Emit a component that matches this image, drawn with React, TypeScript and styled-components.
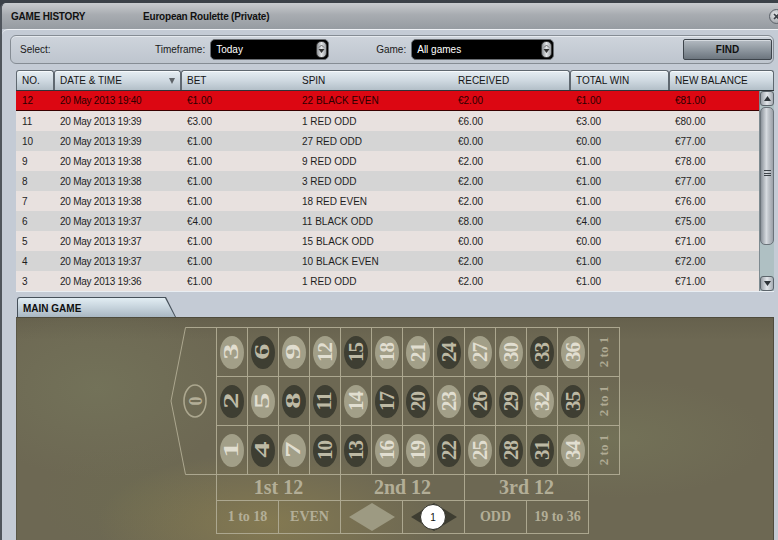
import React from 'react'
import styled, { createGlobalStyle } from 'styled-components'

const GlobalStyle = createGlobalStyle`
    html, body {
        margin: 0;
        padding: 0;
        background: #2d333a;
    }
    body {
        font-family: "Liberation Sans", Arial, sans-serif;
    }
`

const LINE = '#aca78f'
const RED_NUMBERS = [1, 3, 5, 7, 9, 12, 14, 16, 18, 19, 21, 23, 25, 27, 30, 32, 34, 36]

const Screen = styled.div`
    width: 778px;
    height: 540px;
    overflow: hidden;
    box-sizing: border-box;
    padding-top: 3px;
    background: linear-gradient(#3b4148, #272c32);
`

const Window = styled.div`
    height: 537px;
    display: flex;
    flex-direction: column;
    border-left: 2px solid #4f555c;
    border-top-left-radius: 6px;
    background: #c4cbd5;
    overflow: hidden;
`

const TitleBar = styled.div`
    height: 26px;
    flex: none;
    display: flex;
    align-items: center;
    padding-left: 9px;
    background: linear-gradient(#c8cbce, #a8acb1 45%, #969ca2);
    font-size: 10px;
    font-weight: bold;
    color: #111;
    letter-spacing: -0.2px;
`

const Title = styled.span`
    width: 132px;
`

const CloseButton = styled.div`
    margin-left: auto;
    margin-right: -6px;
    width: 13px;
    height: 13px;
    border-radius: 50%;
    background: radial-gradient(circle at 40% 35%, #e4e6e8, #8d9298);
    border: 1px solid #5d636a;
    display: flex;
    align-items: center;
    justify-content: center;
`

const Body = styled.div`
    flex: 1;
    display: flex;
    flex-direction: column;
    border-top: 1px solid #eef1f5;
    border-top-left-radius: 6px;
    padding: 5px 4px 0 8px;
    min-height: 0;
`

const FilterBar = styled.div`
    height: 29px;
    box-sizing: border-box;
    display: flex;
    align-items: center;
    padding-left: 9px;
    border: 1px solid #858c94;
    border-radius: 6px;
    background: linear-gradient(#ced4dc, #bec5ce);
    box-shadow: inset 0 1px 0 #e6eaef;
    font-size: 10px;
    color: #1a1a1a;
`

const Label = styled.span<{ $width?: number; $ml?: number }>`
    width: ${(p) => (p.$width ? `${p.$width}px` : 'auto')};
    margin-left: ${(p) => p.$ml ?? 0}px;
    margin-right: 5px;
`

const Dropdown = styled.div<{ $width: number }>`
    width: ${(p) => p.$width}px;
    height: 21px;
    box-sizing: border-box;
    display: flex;
    align-items: center;
    justify-content: space-between;
    padding: 0 1px 0 5px;
    border: 1px solid #6a6e73;
    border-radius: 5px;
    background: #000;
    color: #fff;
    font-size: 10px;
`

const Knob = styled.div`
    width: 11px;
    height: 17px;
    border-radius: 5px;
    border: 1px solid #3a3a3a;
    box-sizing: border-box;
    background: linear-gradient(90deg, #8e9296, #e2e4e6 50%, #9ea2a6);
    display: flex;
    align-items: center;
    justify-content: center;
`

const FindButton = styled.div`
    margin-left: auto;
    margin-right: 1px;
    width: 89px;
    height: 21px;
    box-sizing: border-box;
    display: flex;
    align-items: center;
    justify-content: center;
    border: 1px solid #3d444b;
    border-radius: 2px;
    background: linear-gradient(#b4bbc2, #8f98a0 50%, #6c757e);
    box-shadow: inset 0 1px 0 #d5dadf;
    font-size: 10px;
    font-weight: bold;
    color: #111;
`

const Table = styled.div`
    margin: 6px 0 0 6px;
    width: 758px;
    flex: none;
`

const COLS = '38px 127px 115px 156px 118px 99px 105px'
const ROW_COLS = '38px 127px 115px 156px 118px 99px 90px'

const HeaderRow = styled.div`
    display: grid;
    grid-template-columns: ${COLS};
    height: 21px;
    border-bottom: 1px solid #2e3338;
    box-sizing: border-box;
`

const HeaderCell = styled.div<{ $edge?: 'left' | 'mid' | 'right' }>`
    position: relative;
    display: flex;
    align-items: center;
    padding-left: 5px;
    border: 1px solid #5f6870;
    border-bottom: none;
    border-radius: 3px 3px 0 0;
    ${(p) => (p.$edge === 'left' || p.$edge === 'mid' ? 'border-right: none; border-top-right-radius: 0;' : '')}
    ${(p) => (p.$edge === 'right' || p.$edge === 'mid' ? 'border-left: none; border-top-left-radius: 0; padding-left: 6px;' : '')}
    background: linear-gradient(#e6eef3, #cfd9e1 50%, #b3bfc8);
    box-shadow: inset 0 1px 0 #f7fafc;
    font-size: 10px;
    color: #151515;
`

const SortArrow = styled.span`
    position: absolute;
    right: 5px;
    top: 7px;
    width: 0;
    height: 0;
    border-left: 3.5px solid transparent;
    border-right: 3.5px solid transparent;
    border-top: 6px solid #5e6368;
`

const RowsWrap = styled.div`
    display: flex;
    border-bottom: 1px solid #e9eef3;
`

const RowList = styled.div`
    flex: 1;
`

const Row = styled.div<{ $variant: 'sel' | 'a' | 'b' }>`
    display: grid;
    grid-template-columns: ${ROW_COLS};
    height: 20px;
    box-sizing: border-box;
    background: ${(p) => (p.$variant === 'sel' ? '#dc0712' : p.$variant === 'a' ? '#e8e1df' : '#d5d5d5')};
    ${(p) => (p.$variant === 'sel' ? 'border-bottom: 1px solid #3a0000;' : '')}
    color: ${(p) => (p.$variant === 'sel' ? '#2a0000' : '#1e1e1e')};
    font-size: 10px;
`

const Cell = styled.div<{ $tight?: boolean }>`
    padding-left: 6px;
    display: flex;
    align-items: center;
    white-space: nowrap;
    letter-spacing: ${(p) => (p.$tight ? '-0.25px' : '0')};
`

const Scrollbar = styled.div`
    width: 15px;
    display: flex;
    flex-direction: column;
    background: #afc0c3;
    border-left: 1px solid #7d8a90;
    box-sizing: border-box;
`

const ScrollButton = styled.div`
    height: 15px;
    flex: none;
    box-sizing: border-box;
    border: 1px solid #5c646b;
    border-radius: 3px;
    background: linear-gradient(90deg, #9ba1a8, #e3e6ea 50%, #a6acb3);
    display: flex;
    align-items: center;
    justify-content: center;
`

const Thumb = styled.div`
    height: 138px;
    flex: none;
    margin-top: 1px;
    box-sizing: border-box;
    border: 1px solid #6b737a;
    border-radius: 5px;
    background: linear-gradient(90deg, #8c939b, #d7dbe0 45%, #c3c8ce 60%, #9ba1a8);
    display: flex;
    justify-content: center;
    padding-top: 62px;
`

const Grip = styled.div`
    width: 7px;
    height: 6px;
    border-top: 1px solid #3c4248;
    border-bottom: 1px solid #3c4248;
    box-sizing: border-box;
    position: relative;
    &::after {
        content: '';
        position: absolute;
        left: 0;
        right: 0;
        top: 1.5px;
        border-top: 1px solid #3c4248;
    }
`

const Track = styled.div`
    flex: 1;
`

const Tab = styled.div`
    margin: 5px 0 0 7px;
    width: 159px;
    height: 20px;
    flex: none;
    padding: 1px 1px 0 1px;
    box-sizing: border-box;
    background: #45505a;
    clip-path: polygon(0 0, calc(100% - 10px) 0, 100% 100%, 0 100%);
    border-radius: 3px 0 0 0;
`

const TabInner = styled.div`
    height: 100%;
    display: flex;
    align-items: flex-end;
    padding: 0 0 3px 5px;
    box-sizing: border-box;
    background: linear-gradient(#e2edf3, #c6d3dc 50%, #a9b7c2);
    clip-path: polygon(0 0, calc(100% - 10px) 0, 100% 100%, 0 100%);
    border-radius: 2px 0 0 0;
    font-size: 10px;
    font-weight: bold;
    color: #0e0e0e;
`

const GameArea = styled.div`
    margin-left: 6px;
    width: 758px;
    flex: 1;
    box-sizing: border-box;
    border-top: 1px solid #4e4b3c;
    border-left: 1px solid #5a5746;
    border-right: 1px solid #4e4b3c;
    padding: 9px 0 0 153px;
    background:
        radial-gradient(ellipse 170px 70px at 250px 205px, rgba(150, 135, 80, 0.55), transparent),
        radial-gradient(ellipse 150px 60px at 600px 120px, rgba(125, 130, 95, 0.35), transparent),
        radial-gradient(ellipse 140px 90px at 80px 70px, rgba(122, 126, 96, 0.45), transparent),
        radial-gradient(ellipse 100px 60px at 120px 180px, rgba(110, 110, 80, 0.4), transparent),
        linear-gradient(#66614d, #6d6853 10%, #6d6853);
`

const Board = styled.div`
    display: flex;
    align-items: flex-start;
`

const Main = styled.div`
    display: flex;
    flex-direction: column;
`

const NumGrid = styled.div`
    display: grid;
    grid-template-columns: repeat(13, 31px);
    grid-template-rows: repeat(3, 49px);
    border-top: 1px solid ${LINE};
    border-left: 1px solid ${LINE};
    width: max-content;
`

const NumCell = styled.div`
    box-sizing: border-box;
    border-right: 1px solid ${LINE};
    border-bottom: 1px solid ${LINE};
    display: flex;
    align-items: center;
    justify-content: center;
`

const Oval = styled.div<{ $dark: boolean }>`
    width: 24px;
    height: 33px;
    border-radius: 50%;
    background: ${(p) => (p.$dark ? '#3e3e32' : '#a29f88')};
    color: ${(p) => (p.$dark ? '#bdb9a4' : '#e1ded0')};
    display: flex;
    align-items: center;
    justify-content: center;
    overflow: hidden;
`

const NumText = styled.span<{ $single: boolean }>`
    font-family: "Liberation Serif", "Times New Roman", serif;
    font-weight: bold;
    font-size: 21px;
    line-height: 1;
    letter-spacing: -1px;
    white-space: nowrap;
    transform: rotate(-90deg) scaleX(${(p) => (p.$single ? 1.55 : 1)});
`

const TwoToOne = styled.span`
    font-family: "Liberation Serif", "Times New Roman", serif;
    font-weight: bold;
    font-size: 13px;
    color: #b0ab94;
    white-space: nowrap;
    transform: rotate(-90deg);
`

const BetRow = styled.div`
    display: flex;
    border-left: 1px solid ${LINE};
    width: max-content;
`

const BetCell = styled.div<{ $w: number; $h: number; $size: number }>`
    position: relative;
    width: ${(p) => p.$w}px;
    height: ${(p) => p.$h}px;
    box-sizing: border-box;
    border-right: 1px solid ${LINE};
    border-bottom: 1px solid ${LINE};
    display: flex;
    align-items: center;
    justify-content: center;
    font-family: "Liberation Serif", "Times New Roman", serif;
    font-weight: bold;
    font-size: ${(p) => p.$size}px;
    color: #b3ae97;
    white-space: nowrap;
`

const Chip = styled.div`
    position: absolute;
    left: 17px;
    top: 3px;
    width: 26px;
    height: 26px;
    box-sizing: border-box;
    border-radius: 50%;
    background: #fff;
    border: 1px solid #2e2e26;
    display: flex;
    align-items: center;
    justify-content: center;
    font-family: "Liberation Sans", Arial, sans-serif;
    font-weight: normal;
    font-size: 10px;
    color: #111;
`

type HistoryRow = [string, string, string, string, string, string, string]

const rows: HistoryRow[] = [
    ['12', '20 May 2013 19:40', '€1.00', '22 BLACK EVEN', '€2.00', '€1.00', '€81.00'],
    ['11', '20 May 2013 19:39', '€3.00', '1 RED ODD', '€6.00', '€3.00', '€80.00'],
    ['10', '20 May 2013 19:39', '€1.00', '27 RED ODD', '€0.00', '€0.00', '€77.00'],
    ['9', '20 May 2013 19:38', '€1.00', '9 RED ODD', '€2.00', '€1.00', '€78.00'],
    ['8', '20 May 2013 19:38', '€1.00', '3 RED ODD', '€2.00', '€1.00', '€77.00'],
    ['7', '20 May 2013 19:38', '€1.00', '18 RED EVEN', '€2.00', '€1.00', '€76.00'],
    ['6', '20 May 2013 19:37', '€4.00', '11 BLACK ODD', '€8.00', '€4.00', '€75.00'],
    ['5', '20 May 2013 19:37', '€1.00', '15 BLACK ODD', '€0.00', '€0.00', '€71.00'],
    ['4', '20 May 2013 19:37', '€1.00', '10 BLACK EVEN', '€2.00', '€1.00', '€72.00'],
    ['3', '20 May 2013 19:36', '€1.00', '1 RED ODD', '€2.00', '€1.00', '€71.00'],
]

function KnobIcon() {
    return (
        <Knob>
            <svg width="7" height="11" viewBox="0 0 7 11">
                <path d="M1 3.5 L3.5 1 L6 3.5" fill="none" stroke="#555" strokeWidth="0.8" />
                <path d="M0.5 5 H6.5 L3.5 9 Z" fill="#333" />
            </svg>
        </Knob>
    )
}

function Zero() {
    return (
        <svg width="46" height="148" viewBox="0 0 46 148" style={{ flex: 'none' }}>
            <path
                d="M46 0.5 H15.5 L1 74 L15.5 147.5 H46"
                fill="none"
                stroke={LINE}
                strokeWidth="1"
            />
            <ellipse cx="25" cy="74" rx="11" ry="16" fill="none" stroke={LINE} strokeWidth="1.6" />
            <text
                x="25"
                y="74"
                transform="rotate(-90 25 74) translate(0 6.5)"
                textAnchor="middle"
                fontFamily="Liberation Serif, serif"
                fontWeight="bold"
                fontSize="18"
                fill="#b3ae97"
            >
                0
            </text>
        </svg>
    )
}

function Diamond({ dark }: { dark?: boolean }) {
    return (
        <svg width="46" height="28" viewBox="0 0 46 28">
            <polygon points="0,14 23,0 46,14 23,28" fill={dark ? '#3e3d31' : '#9d9a82'} />
        </svg>
    )
}

export default function App() {
    const gridRows = [3, 2, 1]
    return (
        <Screen>
            <GlobalStyle />
            <Window>
                <TitleBar>
                    <Title>GAME HISTORY</Title>
                    <span>European Roulette (Private)</span>
                    <CloseButton>
                        <svg width="7" height="7" viewBox="0 0 7 7">
                            <path d="M1 1 L6 6 M6 1 L1 6" stroke="#3a3f45" strokeWidth="1.6" />
                        </svg>
                    </CloseButton>
                </TitleBar>
                <Body>
                    <FilterBar>
                        <Label $width={130}>Select:</Label>
                        <Label>Timeframe:</Label>
                        <Dropdown $width={119}>
                            <span>Today</span>
                            <KnobIcon />
                        </Dropdown>
                        <Label $ml={47}>Game:</Label>
                        <Dropdown $width={143}>
                            <span>All games</span>
                            <KnobIcon />
                        </Dropdown>
                        <FindButton>FIND</FindButton>
                    </FilterBar>

                    <Table>
                        <HeaderRow>
                            <HeaderCell>NO.</HeaderCell>
                            <HeaderCell>
                                DATE &amp; TIME
                                <SortArrow />
                            </HeaderCell>
                            <HeaderCell $edge="left">BET</HeaderCell>
                            <HeaderCell $edge="mid">SPIN</HeaderCell>
                            <HeaderCell $edge="right">RECEIVED</HeaderCell>
                            <HeaderCell>TOTAL WIN</HeaderCell>
                            <HeaderCell>NEW BALANCE</HeaderCell>
                        </HeaderRow>
                        <RowsWrap>
                            <RowList>
                                {rows.map((r, i) => (
                                    <Row key={r[0]} $variant={i === 0 ? 'sel' : i % 2 === 1 ? 'a' : 'b'}>
                                        <Cell>{r[0]}</Cell>
                                        <Cell $tight>{r[1]}</Cell>
                                        <Cell>{r[2]}</Cell>
                                        <Cell>{r[3]}</Cell>
                                        <Cell>{r[4]}</Cell>
                                        <Cell>{r[5]}</Cell>
                                        <Cell>{r[6]}</Cell>
                                    </Row>
                                ))}
                            </RowList>
                            <Scrollbar>
                                <ScrollButton>
                                    <svg width="7" height="5" viewBox="0 0 7 5">
                                        <path d="M0 5 L3.5 0 L7 5 Z" fill="#2e3338" />
                                    </svg>
                                </ScrollButton>
                                <Thumb>
                                    <Grip />
                                </Thumb>
                                <Track />
                                <ScrollButton>
                                    <svg width="7" height="5" viewBox="0 0 7 5">
                                        <path d="M0 0 L7 0 L3.5 5 Z" fill="#2e3338" />
                                    </svg>
                                </ScrollButton>
                            </Scrollbar>
                        </RowsWrap>
                    </Table>

                    <Tab>
                        <TabInner>MAIN GAME</TabInner>
                    </Tab>
                    <GameArea>
                        <Board>
                            <Zero />
                            <Main>
                                <NumGrid>
                                    {gridRows.map((base) => (
                                        <React.Fragment key={base}>
                                            {Array.from({ length: 12 }, (_, c) => {
                                                const n = c * 3 + base
                                                return (
                                                    <NumCell key={n}>
                                                        <Oval $dark={!RED_NUMBERS.includes(n)}>
                                                            <NumText $single={n < 10}>{n}</NumText>
                                                        </Oval>
                                                    </NumCell>
                                                )
                                            })}
                                            <NumCell>
                                                <TwoToOne>2 to 1</TwoToOne>
                                            </NumCell>
                                        </React.Fragment>
                                    ))}
                                </NumGrid>
                                <BetRow>
                                    <BetCell $w={124} $h={26} $size={20}>1st 12</BetCell>
                                    <BetCell $w={124} $h={26} $size={20}>2nd 12</BetCell>
                                    <BetCell $w={124} $h={26} $size={20}>3rd 12</BetCell>
                                </BetRow>
                                <BetRow>
                                    <BetCell $w={62} $h={33} $size={14}>1 to 18</BetCell>
                                    <BetCell $w={62} $h={33} $size={14}>EVEN</BetCell>
                                    <BetCell $w={62} $h={33} $size={14}>
                                        <Diamond />
                                    </BetCell>
                                    <BetCell $w={62} $h={33} $size={14}>
                                        <Diamond dark />
                                        <Chip>1</Chip>
                                    </BetCell>
                                    <BetCell $w={62} $h={33} $size={14}>ODD</BetCell>
                                    <BetCell $w={62} $h={33} $size={14}>19 to 36</BetCell>
                                </BetRow>
                            </Main>
                        </Board>
                    </GameArea>
                </Body>
            </Window>
        </Screen>
    )
}
